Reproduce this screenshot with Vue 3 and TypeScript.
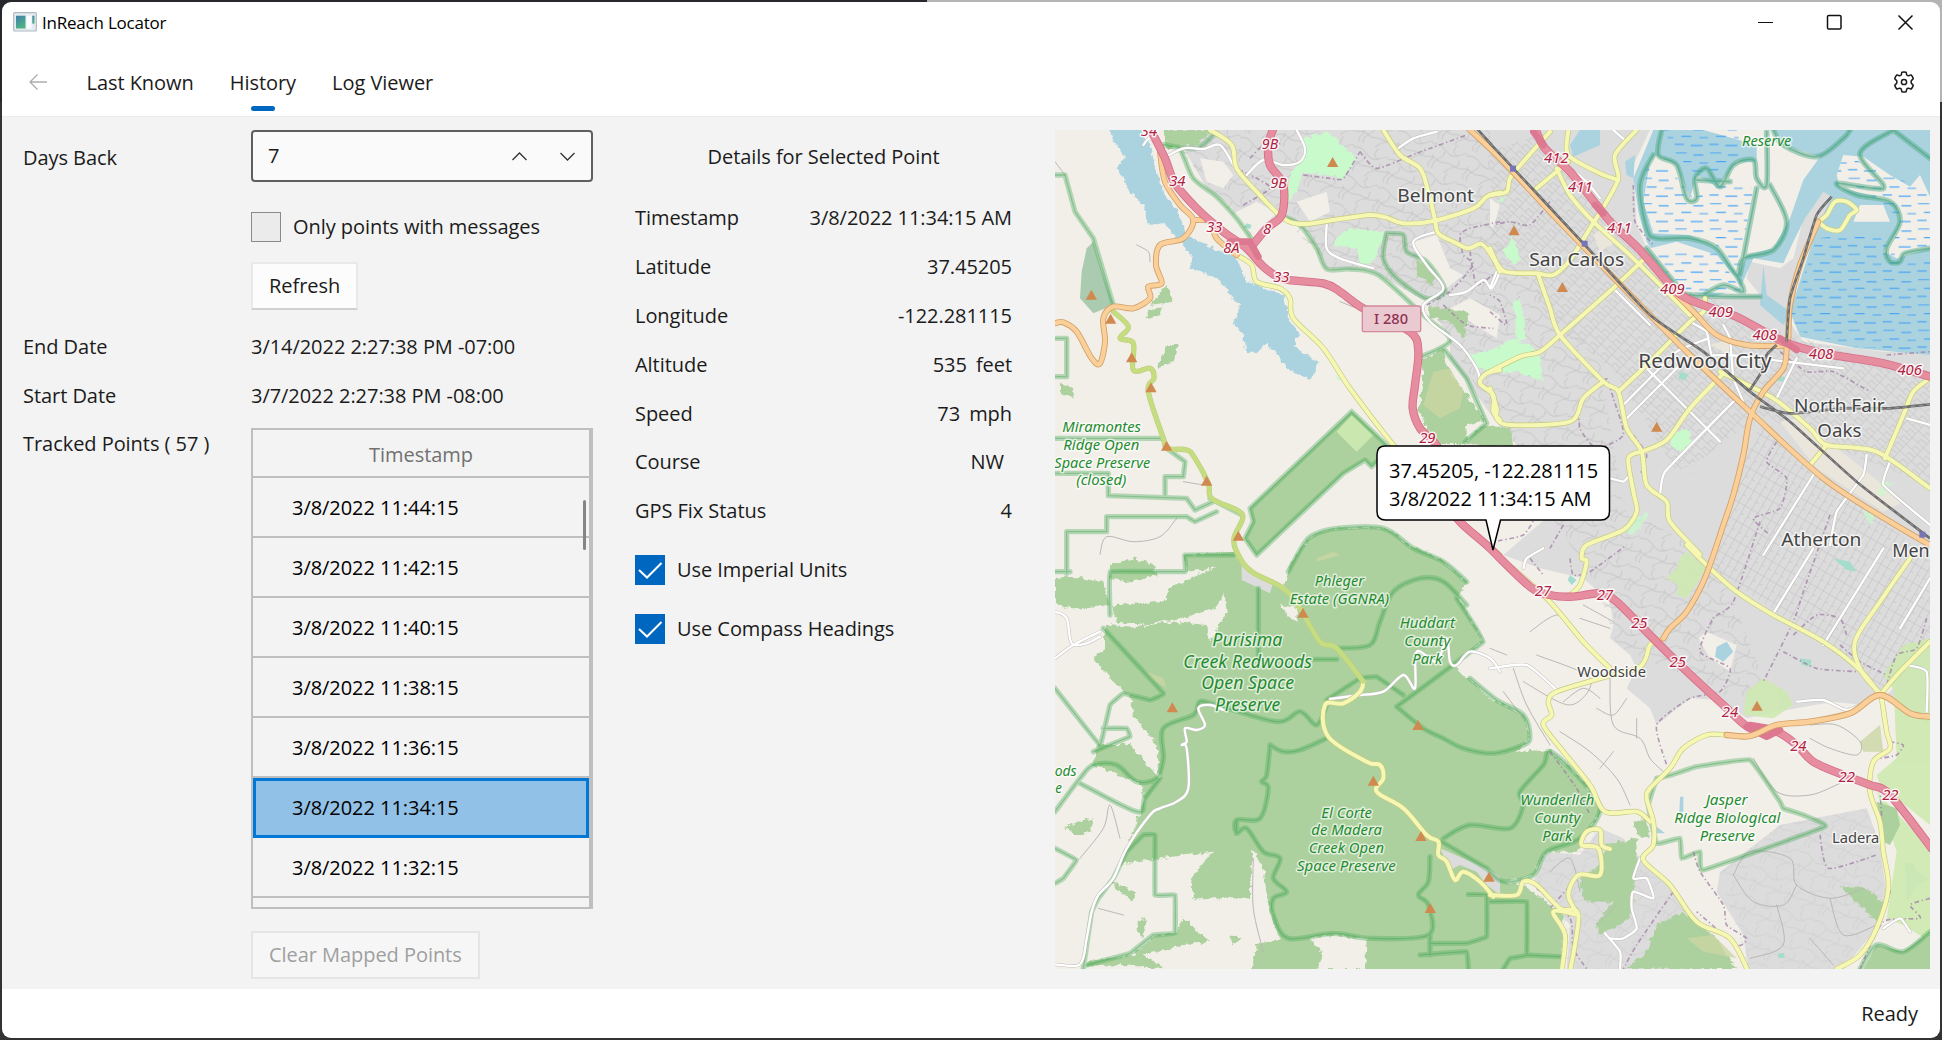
<script setup lang="ts">
import { ref } from 'vue'

interface MapLabel { t: string; x: number; y: number; w: number; s: number }
interface Detail { label: string; value: string; unit?: string; shift?: boolean }

const daysBack = ref(7)
const tabs = ['Last Known', 'History', 'Log Viewer']
const activeTab = ref('History')
const points = ['11:44:15', '11:42:15', '11:40:15', '11:38:15', '11:36:15', '11:34:15', '11:32:15'].map(t => '3/8/2022 ' + t)
const selected = ref('3/8/2022 11:34:15')

const details: Detail[] = [
  { label: 'Timestamp', value: '3/8/2022 11:34:15 AM' },
  { label: 'Latitude', value: '37.45205' },
  { label: 'Longitude', value: '-122.281115' },
  { label: 'Altitude', value: '535', unit: 'feet' },
  { label: 'Speed', value: '73', unit: 'mph' },
  { label: 'Course', value: 'NW', shift: true },
  { label: 'GPS Fix Status', value: '4' },
]
const options = ['Use Imperial Units', 'Use Compass Headings']

const L = (t: string, x: number, y: number, w: number, s: number): MapLabel => ({ t, x, y, w, s })

const towns = [
  L('Belmont', 1157, 230, 230, 56), L('San Carlos', 1580, 422, 285, 56), L('Redwood City', 1965, 730, 400, 60),
  L('North Fair', 2368, 862, 272, 54), L('Oaks', 2368, 937, 132, 54), L('Atherton', 2314, 1263, 240, 54),
  L('Menlo', 2606, 1295, 158, 54), L('Woodside', 1685, 1655, 206, 44), L('Ladera', 2417, 2153, 142, 44),
]
const parks = [
  L('Miramontes', 155, 920, 236, 43), L('Ridge Open', 154, 975, 228, 43), L('Space Preserve', 157, 1028, 288, 43), L('(closed)', 154, 1080, 150, 43),
  L('Reserve', 2150, 63, 148, 42), L('Phleger', 868, 1382, 148, 43), L('Estate (GGNRA)', 868, 1436, 298, 43),
  L('Huddart', 1132, 1510, 166, 43), L('County', 1132, 1564, 138, 43), L('Park', 1132, 1618, 90, 43),
  L('Purisima', 592, 1563, 210, 52), L('Creek Redwoods', 593, 1628, 386, 52), L('Open Space', 593, 1692, 278, 52), L('Preserve', 593, 1757, 196, 52),
  L('El Corte', 890, 2078, 152, 43), L('de Madera', 890, 2131, 212, 43), L('Creek Open', 889, 2185, 226, 43), L('Space Preserve', 889, 2239, 296, 43),
  L('Wunderlich', 1522, 2040, 222, 43), L('County', 1522, 2094, 138, 43), L('Park', 1522, 2147, 90, 43),
  L('Jasper', 2030, 2040, 126, 43), L('Ridge Biological', 2032, 2093, 318, 43), L('Preserve', 2032, 2147, 166, 43),
  L('ods', 47, 1952, 66, 43), L('e', 26, 2005, 20, 43),
]
const exits: [string, number, number][] = [
  ['34', 297, 32], ['34', 382, 183], ['33', 493, 320], ['8A', 544, 385], ['33', 694, 470], ['9B', 660, 72], ['9B', 686, 190], ['8', 651, 326], ['29', 1132, 955],
  ['412', 1519, 115], ['411', 1591, 200], ['411', 1708, 325], ['409', 1867, 507], ['409', 2012, 577], ['408', 2144, 645], ['408', 2313, 703], ['406', 2579, 750],
  ['27', 1479, 1414], ['27', 1665, 1424], ['25', 1768, 1510], ['25', 1883, 1627], ['24', 2040, 1775], ['24', 2245, 1878], ['22', 2390, 1972], ['22', 2521, 2026],
]
const peaks = [
  [848, 112], [124, 510], [182, 582], [245, 698], [303, 788], [350, 963], [470, 1068], [565, 1233], [1392, 317], [1537, 487], [1820, 906],
  [759, 1464], [367, 1748], [1104, 1801], [970, 1968], [1113, 2134], [1317, 2256], [1141, 2350], [2121, 1743],
]

// Turns point lists ("x,y x,y M x,y ...") into path data; bend 0 keeps straight segments.
const trace = (dx: number, dy: number, bend: number, list: string[]): string[] => list.map(src => src.split('M').map(part => {
  const pts = part.trim().split(/\s+/).filter(Boolean).map(c => { const [x, y] = c.split(',').map(Number); return [x + dx, y + dy] })
  if (!pts.length) return ''
  let d = `M${pts[0].join(' ')}`
  for (let i = 0; i < pts.length - 1; i++) {
    const p0 = pts[i - 1] ?? pts[i], p1 = pts[i], p2 = pts[i + 1], p3 = pts[i + 2] ?? p2
    d += `C${p1[0] + (p2[0] - p0[0]) * bend} ${p1[1] + (p2[1] - p0[1]) * bend} ${p2[0] - (p3[0] - p1[0]) * bend} ${p2[1] - (p3[1] - p1[1]) * bend} ${p2[0]} ${p2[1]}`
  }
  return d
}).join(''))

const secondary = [
  ...trace(0, 0, .16, [
    '480,15 545,60 560,130 620,200 700,280 760,297 850,285 960,270 1010,278 1060,295 1150,288 1270,250 1310,215 1350,203',
    '1000,15 1050,90 1110,130 1135,200 1155,285 1165,325 1210,350 1255,370 1295,357 1330,400 1350,440',
    '560,390 605,420 620,470 690,490 720,520 730,580 820,670 900,790 1030,960 1200,1160 1350,1290',
    '1350,735 1310,745 1290,775 1330,810 1330,860 1350,885',
  ]),
  ...trace(1320, 0, .14, [
    '0,210 50,200 60,160 100,110 180,20', '0,370 40,438 140,445 190,450 240,405 300,310 350,230 385,160 375,90 440,15',
    '145,450 180,550 210,630 340,770 385,800 410,910 455,980 470,1080 530,1130 540,1190 630,1288',
    '0,740 90,695 150,680 210,630 380,480 470,395', '385,800 470,720 600,590 640,560 645,520',
    '455,980 530,945 600,850 700,745', '455,980 415,1000 430,1100 440,1160 400,1215 290,1260 275,1300 290,1310 270,1380 235,1415',
    '0,790 20,850 20,880 60,900 240,890 280,820 340,770', '200,130 240,210 310,290 430,400 600,570',
    '235,15 235,90 330,145 385,165', '140,190 235,110', '690,740 850,820 960,910 1010,960 1160,980 1320,1090',
    '1010,960 960,1020', '1185,1000 1240,870 1270,800 1320,760', '985,290 1010,310 1050,315 1080,270 1100,255 1070,230 1035,230 1010,270 985,290',
  ]),
  ...trace(1320, 1260, .16, [
    '20,30 170,160 280,290 360,370', '590,0 660,70 740,140 850,210 1000,290 1110,375 1170,450', '1260,40 1170,170 1095,290 1115,380 1170,445', '1170,450 1230,380 1320,290',
    '1175,460 1190,560 1200,610 1150,650 1140,740 1170,830 1180,920 1195,1030 1160,1150 1110,1230 1040,1272',
    '510,285 480,300 450,365 330,400 200,440 175,470 185,510 160,540 220,620 300,720 345,800 440,800 480,830',
    '710,570 650,570 580,610 540,670 480,730 470,760 490,830 490,900 460,945 540,1020 620,1130 720,1180 775,1280',
    '0,1050 80,1050 100,1010 140,1020 210,1090 265,1110 240,1280', '265,1110 190,1100 225,1170 215,1280', '265,1110 235,1050 265,990 330,990 325,910 275,900 290,860 330,855 335,900 360,912',
  ]),
]
const skyline = trace(0, 0, .18, ['190,560 235,605 210,640 250,655 250,735 300,730 312,760 295,800 340,940 352,970 410,975 435,1000 475,1075 485,1120 560,1155 578,1180 552,1240 565,1290 605,1340 700,1390 750,1450 810,1550 860,1570 940,1670'])
const skylineSouth = trace(0, 0, .18, ['940,1670 930,1700 880,1735 825,1740 835,1835 950,1910 990,1920 1000,1960 980,2000 1060,2050 1130,2130 1165,2150 1165,2190 1190,2210 1215,2265 1240,2240 1290,2270 1330,2315'])
const primary = trace(0, 0, .16, [
  '330,80 345,170 390,240 430,285 400,340 330,360 318,420 335,475 295,485 300,520 250,550 190,545 160,580 165,650 150,715 125,700 80,620 40,592 15,595',
  '430,285 480,290 500,340 560,390', '1255,10 1350,100 1500,260 1620,385 1770,540 1920,690 2100,860 2320,1060 2520,1190 2640,1260',
  '2210,670 2200,730 2140,800 2100,880 2080,990 2050,1110 2020,1200 1990,1290 1960,1370 1910,1460 1860,1510 1840,1540', '1880,510 1935,565 2000,630 2090,660 2210,662',
  '2215,640 2220,540 2250,420 2305,290',
])
const portola = trace(0, 0, .16, ['2030,1830 2100,1833 2180,1800 2280,1790 2400,1765 2490,1710 2580,1765 2640,1775'])
const motorway = trace(0, 0, .16, [
  '300,10 345,100 375,175 440,250 520,320 590,370 640,425 700,462 820,475 870,500 940,550 1080,620 1105,680 1095,780 1088,850 1110,910 1170,980 1200,1150 1320,1270 1440,1385 1500,1410 1570,1415 1650,1405 1700,1430 1770,1500 1880,1610 2020,1740 2100,1810 2180,1820 2240,1860 2290,1910 2380,1950 2460,1980 2520,2010 2645,2170',
  '1455,10 1485,70 1560,140 1640,240 1690,300 1770,375 1880,500 1960,540 2060,575 2200,650 2320,685 2500,715 2640,755',
  '670,10 655,60 660,120 700,180 695,270 650,310 600,370',
])
const minor = [
  ...trace(0, 0, .16, ['340,100 400,70 460,72 510,60 550,120', '740,15 765,70 750,110 700,120 640,105 590,150', '830,300 830,370 870,400 970,430', '1160,320 1090,350 1130,420 1180,490 1120,540 1140,590 1230,660 1280,730 1290,770', '1200,510 1250,500 1300,465 1325,490 1350,440', '1045,70 1090,40 1160,20', '280,60 300,40 330,70']),
  ...trace(1320, 0, .05, ['370,490 480,600', '460,720 520,780 690,950', '400,840 560,680 655,640', '410,880 480,810 600,690', '510,1110 525,1040 740,820', '600,590 650,620 665,690 720,690 1060,730', '700,600 720,640 730,760 760,830', '920,700 860,820', '1130,990 1120,1050 1040,1160 1020,1260', '970,1050 820,1290', '0,490 20,440', '360,1060 400,1070 420,1050', '240,130 290,170 330,220', '370,15 410,50', '1200,1010 1180,1080 1320,1200', '1320,900 1250,880']),
  ...trace(0, 1260, .16, ['15,340 70,300 150,260', '15,200 50,220 65,295 110,295 150,275', '15,1258 90,1258 110,1180 125,1100 145,1050 190,1000 230,910 300,810 330,790 380,770 415,730 410,610 395,600 410,590 405,550 440,555 465,540 445,490 480,480 520,495', '930,450 1000,440 1060,390 1095,430 1100,320 1160,350 1190,280 1200,350 1220,360 1260,320 1320,340 1350,380', '840,462 930,450']),
  ...trace(1320, 1260, .1, ['0,370 110,360 200,435', '100,70 110,40 160,10', '970,10 850,205', '1180,10 1000,300', '1230,250 1320,100', '920,470 1000,465 1070,495 1130,470', '1250,360 1310,380 1310,500', '450,940 430,1000 470,1000 490,1060 430,1040 425,1090 440,1150 400,1180 360,1180 345,1165 390,1220 390,1272', '1180,1150 1230,1120 1260,1160']),
]
const rails = trace(0, 0, .1, ['1320,55 1390,130 1600,355 1800,570 1960,680 2100,800 2220,890 2420,1070 2640,1240', '2210,650 2220,520 2260,400 2300,270 2345,215', '2180,660 2150,690 2135,740 2100,795', '2130,845 2220,865 2380,850 2520,850 2640,838', '1280,10 1325,60'])
const borders = trace(0, 0, .1, ['600,100 640,60 690,55 M580,240 660,190 620,160 560,130', '930,80 980,130 1100,85 1250,30', '760,150 840,160 880,160 930,80', '1350,290 1260,310 1230,330 1240,390 1270,420 1200,500 1130,540',
  '1320,560 1370,600 1350,530 1320,510', '1500,230 1440,300 1380,290 1330,300', '1670,760 1630,800 1590,830 1590,910 1640,970 1720,930 1690,820 1670,760', '1750,180 1755,290 1810,360', '1260,380 1280,480 1340,440 M1180,540 1250,600 1330,610',
  '1750,930 1790,990 1770,1050', '2180,950 2150,1010 2210,1060 2190,1150 2110,1180 2160,1230', '2190,680 2270,740 2350,740 2460,800 M2510,690 2640,680', '2340,1170 2260,1400 2230,1490 2140,1670', '1460,1170 1420,1230 1330,1250 M1540,1200 1500,1270',
  '2130,1190 2050,1430 1990,1480 1950,1580 2040,1630 2010,1700 1920,1720 1820,1800 1850,1920', '2200,1580 2300,1630 2420,1640 M2230,1530 2300,1470 2370,1480 2390,1530', '2630,1480 2600,1570 2540,1590 2510,1680',
  '2370,1560 2430,1610 2510,1650', '1560,1300 1570,1350 1620,1340 1730,1260', '1580,2260 1500,2350 M1870,2300 1760,2460 1720,2532', '1930,2180 1950,2240 2020,2340 2030,2400 2090,2440 2060,2460 1940,2360', '2310,2130 2335,2230 2480,2190', '1500,1880 1580,1990 1620,2070',
  '2520,1850 2560,1860 2540,1890 2490,1900 M2640,2320 2580,2340 2610,2380 2500,2390 2430,2532', '1460,2290 1560,2380 1570,2470 1610,2532', '1440,1300 1480,1350', '2490,1990 2500,2150 2520,2300 2480,2410'])
const preserves = [
  ...trace(0, 0, 0, ['15,150 45,150 75,260 130,340 190,540', '15,640 50,640 50,755 15,755', '15,940 340,940', '350,970 405,1010 400,1055 345,1055 345,1110', '15,1045 175,1045 175,1112 410,1120 435,1155 490,1130', '50,1345 50,1220 170,1220 170,1175 410,1175 435,1190 500,1160',
    '905,860 1020,970 965,1025 945,1005 880,1045 620,1290 585,1240 610,1190 600,1150 905,860', '480,1120 575,1170 M1180,670 1250,760 1310,895 1245,950']),
  ...trace(0, 0, .14, ['340,60 390,75 430,160 500,215 560,280 610,350', '690,270 750,300 800,370 830,432 900,432 985,450 1120,570 1200,645 1115,695', '340,60 440,70 490,30', '1010,325 1000,400 1040,460 1130,520 1185,495 1130,410 1070,380 1060,330 1010,325']),
  ...trace(0, 1260, .02, ['15,80 60,80 M180,210 180,80 405,80 405,30 550,30', '160,250 340,445 300,465 220,445 180,480 150,600 15,430', '130,620 240,575 230,550 160,550', '625,130 625,330', '790,343 860,343',
    '830,465 930,400 980,395 1060,450', '560,825 560,865', '230,920 280,870 315,870 315,1050 375,1050 375,1165 310,1170 240,1225 110,1260', '100,1270 125,1100 145,1060 190,1000 230,920', '1140,1195 1250,1195 1310,1175 1310,1050 1255,1048', '1110,1230 1250,1220 1255,1272', '1140,1170 1140,1230',
    '1220,160 1300,290 1040,485', '1320,1070 1430,1070 1430,1230 1380,1240 1360,1272', '15,910 80,945 40,1000 15,1015', '1430,1230 1530,1235']),
  ...trace(0, 1260, .16, ['860,310 960,300 990,230 1030,140 1110,100 1180,110 1250,180', '15,800 90,700 130,660 200,660 260,710 320,700 340,640 340,550 430,510 450,470 500,480 680,530 750,500 800,540 830,480', '90,715 260,800 285,760 330,700',
    '660,600 650,690 635,710 655,730 630,820 560,825 560,865 590,850 640,920 690,940 670,1000 710,1040 670,1060 670,1110 715,1180 850,1165 960,1180 1135,1170 1135,1080 1105,1050 1135,1010 1140,935', '660,600 700,620 750,615 830,580',
    '1040,485 1120,550 1180,580 1240,610 1330,625 1420,600 1440,575 1420,510 1340,465 1260,400', '1175,890 1310,970', '1180,880 1260,840 1380,850 1420,780 1410,740 1480,660 1500,620 1580,690 1650,790 1590,880 1490,920 1450,990 1360,1010 1310,970',
    '715,80 760,0 790,-30 860,-50 1000,-50 1090,10 1180,50 1250,110', '2640,1160 2560,1220 2480,1200 2430,1272']),
  ...trace(1320, 1260, .04, ['500,700 545,690 620,665 780,645 870,770 880,790 940,810 1005,845 640,975 630,920 575,940 570,880 500,895 475,780 500,700']),
]
const shore = trace(1320, 0, .16, ['515,15 505,90 560,120 590,220 620,220 615,160 650,130 690,185 730,120 790,105 800,160 830,180 830,20', '490,90 450,180 470,310 500,340 600,340 680,370 740,450 760,400 850,375 890,290 840,180', '620,165 720,170 M800,190 750,450', '470,370 560,480 600,510 810,515', '640,510 700,480 760,500 740,450',
  '1210,15 1110,85 1180,180 1150,190 1040,175 1100,210 1200,230 1230,290 1190,370 1200,410 1230,410 1245,385 1320,370', '850,15 880,60 980,95 1060,40 1080,15', '1210,15 1320,100'])
const lanes = trace(0, 0, .16, ['15,110 45,150', '260,360 295,380 300,410', '150,1288 170,1235 250,1250 330,1235 380,1180', '400,1070 460,1080', '870,530 920,550', '2110,1900 2180,2000 2280,2010 2370,1975', '90,2200 160,2110 180,2040 210,2140',
  '1440,1520 1530,1470 1600,1560 M1460,1590 1620,1660 1560,1740 1420,1670', '1680,1660 1690,1800 1770,1840 1800,1900 1840,1940', '1390,1630 1430,1740 1500,1860', '1730,1720 1690,1770 1640,1750 M1760,1780 1760,1840', '2280,1800 2360,1800 2430,1850 2420,1890 2340,1870 2280,1840',
  '145,2350 220,2370', '610,2200 610,2350 640,2480', '1370,1590 1320,1570 M1600,1440 1690,1490 M1590,1480 1680,1510', '2050,2250 2100,2180 2220,2200 2240,2280 2340,2320 2440,2290 M2180,2340 2200,2460 2100,2500', '2240,2280 2200,2340 2110,2330 2050,2250', '2340,2320 2380,2430 2480,2400 M2280,2440 2350,2520', '1500,2240 1560,2200 1590,2300 M1640,2400 1700,2340',
  '1540,1730 1600,1690 1650,1720 M1530,1820 1620,1880 1700,1960 1740,2040 M1690,1880 1650,1930 M1360,1700 1420,1780'])
</script>

<template>
  <div class="desktop">
    <main class="window">
      <header class="titlebar">
        <svg class="app-icon" viewBox="0 0 24 20">
          <defs><linearGradient id="iconShade" x2="0.5" y2="1"><stop stop-color="#3f7fae" /><stop offset="1" stop-color="#4fb283" /></linearGradient></defs>
          <rect x=".7" y=".7" width="22.6" height="18.3" rx="1" fill="#e6ebf0" stroke="#aeb9c4" stroke-width="1.2" />
          <rect x="3" y="3.700" width="9.500" height="12.800" fill="url(#iconShade)" /><rect x="13.500" y="3.700" width="5" height="12.800" fill="#fafcff" />
          <rect x="19.300" y="3.700" width="2.200" height="8" fill="url(#iconShade)" />
        </svg>
        <h1>InReach Locator</h1>
        <svg class="captions" viewBox="0 0 160 20" fill="none" stroke="#111" stroke-width="1.5">
          <path d="M3 10.500h15" stroke-width="1.200" /><rect x="72.500" y="3.500" width="13.500" height="13.500" rx="1.300" /><path d="M143.500 3.500l14 14M157.500 3.500l-14 14" />
        </svg>
      </header>

      <nav class="nav">
        <svg class="back" viewBox="0 0 20 18" fill="none" stroke="#adadad" stroke-width="1.3"><path d="M19 9H2M9.500 1.500L2 9l7.500 7.500" /></svg>
        <a v-for="t in tabs" :key="t" :class="{ active: t === activeTab }" @click="activeTab = t">{{ t }}</a>
        <svg class="gear" viewBox="0 0 22 22" fill="none" stroke="#1b1b1b" stroke-width="1.5" stroke-linejoin="round">
          <path d="M8.900 1.200Q11 .7 13.100 1.200L13.700 3.900Q14.300 4.800 15.500 4.700L18.100 3.900Q19.700 5.500 20.300 7.700L18.400 9.600Q17.800 11 18.400 12.400L20.300 14.300Q19.700 16.500 18.100 18.100L15.500 17.300Q14.300 17.200 13.700 18.100L13.100 20.800Q11 21.300 8.900 20.800L8.300 18.100Q7.700 17.200 6.500 17.300L3.900 18.100Q2.300 16.500 1.700 14.300L3.600 12.400Q4.200 11 3.600 9.600L1.700 7.700Q2.300 5.500 3.900 3.900L6.500 4.700Q7.700 4.800 8.300 3.900Z" />
          <circle cx="11" cy="11" r="2.600" />
        </svg>
      </nav>

      <section class="content">
        <div class="query">
          <label class="days">Days Back</label>
          <div class="number">
            <span>{{ daysBack }}</span>
            <svg viewBox="0 0 16 9" @click="daysBack++"><path d="M1 8l7-7 7 7" /></svg>
            <svg viewBox="0 0 16 9" @click="daysBack--"><path d="M1 1l7 7 7-7" /></svg>
          </div>
          <div class="check second"><i></i><span>Only points with messages</span></div>
          <button class="second">Refresh</button>
          <label>End Date</label><span class="w">3/14/2022 2:27:38 PM -07:00</span>
          <label>Start Date</label><span class="w">3/7/2022 2:27:38 PM -08:00</span>
          <label class="tracked">Tracked Points ( 57 )</label>
          <div class="table">
            <div class="head">Timestamp</div>
            <div v-for="p in points" :key="p" class="row" :class="{ on: p === selected }" @click="selected = p">{{ p }}</div>
            <div class="thumb"></div>
          </div>
          <button class="second" disabled>Clear Mapped Points</button>
        </div>

        <div class="details">
          <h2>Details for Selected Point</h2>
          <div v-for="d in details" :key="d.label" class="detail">
            <span>{{ d.label }}</span><span class="value" :class="{ shift: d.shift }">{{ d.value }}<em v-if="d.unit">{{ d.unit }}</em></span>
          </div>
          <div v-for="o in options" :key="o" class="check on">
            <i><svg viewBox="0 0 30 30"><path d="M4 15l8 7.500L26.500 8" /></svg></i><span>{{ o }}</span>
          </div>
        </div>

        <div class="map">
          <svg viewBox="15 15 2625 2517" preserveAspectRatio="none">
            <defs>
              <pattern id="streets" width="46" height="27" patternUnits="userSpaceOnUse" patternTransform="rotate(43)"><path d="M0 1H46M1 0V27M24 14H46M24 14V27" stroke="#c3c2c2" stroke-width="2" fill="none" /></pattern>
              <pattern id="streets2" width="52" height="22" patternUnits="userSpaceOnUse" patternTransform="rotate(-60)"><path d="M0 1H52M1 0V22M28 0V11" stroke="#c3c2c2" stroke-width="2" fill="none" /></pattern>
              <pattern id="hills" width="110" height="90" patternUnits="userSpaceOnUse" patternTransform="rotate(20)"><path d="M0 20C30 0 50 50 80 30S100 10 110 20M20 90C10 60 50 50 40 30M60 90C70 60 100 70 90 40M0 60C20 50 30 70 50 62S90 70 110 60M70 0C60 20 70 30 80 30M10 90C-5 70 20 70 10 50" stroke="#c0bfbf" stroke-width="2.200" fill="none" /></pattern>
              <pattern id="marsh" width="104" height="76" patternUnits="userSpaceOnUse"><path d="M4 8h34M58 14h30M22 34h30M76 38h26M2 58h28M50 62h36" stroke="#4aa5f5" stroke-width="3.500" /></pattern>
              <filter id="rough" x="-2%" y="-2%" width="104%" height="104%"><feTurbulence type="fractalNoise" baseFrequency=".06" numOctaves="3" seed="4" /><feDisplacementMap in="SourceGraphic" scale="20" xChannelSelector="R" yChannelSelector="G" /></filter>
            </defs>
            <rect x="0" y="0" width="2660" height="2560" fill="#f2efe9" />

            <!-- built-up areas -->
            <g fill="#dcdcdc">
              <path d="M340 15L400 70 430 120 470 190 540 240 600 330 700 270 770 310 830 430 960 435 1130 530 1200 640 1200 700 1345 900 1400 960 1500 1170 1360 1290 1470 1330 1600 1360 1680 1430 1690 1500 1680 1540 1740 1590 1760 1630 1730 1690 1800 1750 1820 1800 1920 1720 2010 1725 2090 1780 2180 1760 2350 1730 2440 1740 2500 1700 2640 1600V680L2500 680 2260 650 2225 600 2220 560 2280 350 2320 270 2350 210 2320 195 2260 280 2230 400 2190 430 2100 410 2090 460 2130 510 1960 520 1880 490 1790 370 1760 300 1750 120 1800 15Z" />
              <path d="M2190 2100L2450 2050 2490 2160 2510 2310 2480 2410 2380 2532H2095L2080 2430 2000 2300 2010 2240Z" />
              <path d="M1490 2180L1590 2190 1650 2110 1720 2140 1770 2200 1870 2300 1980 2420 1990 2532H1550L1560 2400 1450 2270Z" />
              <path d="M2600 1620L2640 1600V1800L2500 1720Z" />
            </g>
            <path d="M340 15L600 330 700 270 830 430 960 435 1130 530 1345 900 1400 960 1500 1170 1640 1380 1700 1560 1990 1700 2180 1760 2000 1300 1720 1150 1650 700 1450 480 1320 300 1320 15Z" fill="url(#hills)" />
            <path d="M1320 80L1460 30 1780 370 2100 590 2640 760V1080L2430 1000 2130 870 1960 1000 1880 1040 1700 750 1480 560 1430 420 1330 420Z" fill="url(#streets)" />
            <path d="M2130 900L2640 1300V1600L2500 1690 2380 1600 1990 1330 2080 1010Z" fill="url(#streets2)" />
            <path d="M2190 2100L2450 2050 2490 2160 2500 2310 2380 2532H2095L2010 2240ZM1490 2180L1650 2110 1870 2300 1980 2420 1900 2532H1560L1450 2270Z" fill="url(#hills)" opacity=".5" />
            <g fill="#f2efe9"><path d="M450 100L520 110 550 150 520 190 470 170ZM540 270L620 230 680 265 610 330ZM740 230L830 200 840 260 780 290ZM1090 350L1160 330 1200 430 1240 450 1190 490 1120 420ZM1320 220L1350 240 1330 310 1320 300ZM1945 1540L1970 1520 2060 1560 2040 1640 1980 1600ZM1200 550L1260 520 1350 570 1340 640 1260 590Z" /></g>
            <g fill="#ebe6dc"><path d="M1630 330L1670 300 1700 350 1650 380ZM2190 890L2240 880 2400 1000 2560 1130 2500 1160 2300 1030ZM1980 660L2050 640 2040 690Z" /></g>

            <!-- water and marsh -->
            <g fill="#aad3df">
              <path filter="url(#rough)" d="M175 10H270L300 60 320 150 350 220 380 250 410 330 470 360 560 400 590 470 700 510 720 590 750 630 730 660 805 715 785 760 720 740 690 700 650 655 620 685 585 680 580 630 550 600 570 540 500 460 420 430 425 390 370 330 340 290 300 300 280 240 240 200 200 130 225 100 200 60Z" />
              <path d="M1810 15H2640V690L2420 670 2250 635 2220 560 2300 310 2345 215 2320 200 2265 280 2230 350 2200 415 2110 400 2070 490 1990 515 1880 490 1790 350 1765 260 1750 160Z" />
              <path d="M1590 15H1650V60L1570 95 1560 60ZM1725 110L1755 90 1750 160 1730 150ZM2000 1565L2030 1550 2050 1580 2020 1610 1995 1595ZM1890 2015L1900 2015 1900 2060 1888 2065ZM1820 2105L1845 2125 1820 2125ZM2565 2215L2590 2215 2600 2240 2640 2260 2600 2280 2570 2330 2570 2270Z" />
              <path d="M2140 420L2150 510 2220 560 2200 600 2130 540Z" />
            </g>
            <g stroke-linejoin="round">
              <path fill="#f2efe9" d="M1840 15H2170L2200 60 2310 95 2260 165 2220 280 2170 370 2090 390 2065 450 2000 370 1920 330 1810 325 1780 230 1800 110 1815 90 1880 120 1920 220 1940 150 2000 185 2060 110 2120 110 2120 60 1960 15ZM1800 370L1880 350 2000 390 2060 460 2080 505 1880 500ZM2360 150L2380 90 2440 95 2520 150 2580 185 2610 150 2640 215V370L2540 400 2500 380 2550 300 2540 240 2460 210 2370 190ZM2430 240L2500 240 2520 290 2410 290Z" />
              <path fill="url(#marsh)" d="M1840 15H2060L2080 90 1980 150 1930 140 1880 90ZM1790 120L1850 120 1930 220 2030 170 2110 190 2065 440 1980 340 1810 320 1780 240ZM1800 370L2000 385 2080 505 1890 500ZM2360 150L2380 90 2520 150 2640 200V370L2520 395 2550 280 2460 210ZM2300 340L2510 320 2510 400 2640 400V680L2420 665 2235 615 2225 560Z" />
            </g>

            <!-- woodland -->
            <g fill="#add19e" filter="url(#rough)">
              <path d="M165 1500L260 1505 370 1490 470 1500 480 1550 530 1460 520 1380 560 1290 610 1340 700 1390 720 1320 760 1260 790 1230 860 1208 1000 1208 1090 1260 1180 1310 1250 1370 1225 1415 1300 1550 1210 1620 1240 1650 1320 1720 1420 1770 1440 1840 1400 1880 1500 1875 1580 1950 1660 2050 1600 2140 1580 2180 1490 2180 1450 2250 1360 2270 1420 2280 1540 2370 1535 2560H600L620 2460 690 2440 670 2390 650 2310 640 2230 610 2170 600 2290 600 2320 480 2320 430 2320 420 2260 490 2180 330 2200 250 2210 210 2220 250 2120 280 2040 280 1980 130 1920 140 1860 240 1860 320 1950 330 1960 320 1860 250 1770 240 1710 180 1660 130 1600 165 1570Z" />
              <path d="M15 1360L60 1355 160 1370 175 1440 110 1450 50 1450 15 1430ZM180 1320L250 1300 310 1320 320 1350 240 1370 180 1360ZM200 1490L190 1440 340 1430 370 1380 500 1330 410 1340 400 1290 560 1280 540 1370 500 1450 390 1480 280 1500Z" />
              <path d="M1180 670L1115 705 1120 780 1105 850 1130 910 1170 960 1250 960 1250 900 1305 885 1270 840 1190 720ZM1240 960L1290 905 1380 905 1390 965ZM350 480L370 530 300 540ZM350 660L385 660 370 710 320 730ZM290 560L340 545 330 570 290 580ZM30 770L70 790 70 820 30 800ZM1135 545L1260 560 1240 640 1200 590 1140 575ZM1100 400L1160 450 1150 480 1100 450ZM340 15H490L440 60 350 70Z" />
              <path d="M60 2100L130 2080 120 2120 90 2130 40 2110ZM180 2270L260 2300 250 2330 200 2290ZM260 2390L290 2380 280 2440 260 2420ZM540 2430L575 2440 550 2460ZM110 2510L250 2490 320 2430 380 2420 400 2380 480 2450 400 2460 280 2490 340 2530 220 2520 110 2525Z" />
              <path d="M1670 2160L1760 2140 1760 2220 1740 2380 1650 2430 1640 2390 1690 2330 1600 2330 1590 2260 1650 2220ZM1820 2400L1900 2360 1990 2430 2060 2532H1730L1790 2480ZM2370 2285L2450 2290 2500 2330 2490 2400ZM1750 2090L1790 2080 1800 2140 1760 2130Z" />
            </g>
            <path fill="#add19e" d="M905 860L1020 970 965 1025 945 1005 880 1045 620 1290 585 1240 610 1190 600 1150Z" />
            <path fill="#f2efe9" filter="url(#rough)" d="M780 2440L850 2430 950 2440 945 2532H800L820 2490ZM1260 1640L1310 1600 1370 1690 1340 1700ZM690 1440L745 1450 740 1490 715 1475ZM240 1390L420 1350 400 1375 250 1400ZM1010 1205L1110 1240 1150 1280 1080 1265Z" />
            <path fill="#dcdcdc" d="M575 1320L610 1340 670 1370 660 1405 575 1365ZM1170 2170L1320 2235 1350 2255V2310L1310 2280 1280 2240 1230 2220 1200 2235Z" />
            <path fill="#aacbb0" d="M130 350L150 420 190 540 130 565 90 520 95 440 110 370Z" />
            <g fill="#cde9b0" opacity=".9">
              <path d="M905 870L860 920 920 980 970 930ZM1850 1360L1880 1330 1890 1300 1910 1280 1970 1330 1930 1390 1910 1420 1880 1410 1885 1380ZM2090 1700L2140 1660 2210 1700 2230 1740 2170 1780 2080 1770ZM2530 1660L2640 1600V2100L2490 1980 2480 1950 2540 1900ZM2480 2000L2640 2170V2450L2560 2400 2510 2380 2540 2180Z" />
              <path d="M2500 1650L2560 1560 2640 1540V1700L2560 1740Z" />
            </g>
            <g fill="#add19e"><path d="M2480 2030L2540 2050 2550 2100 2520 2160 2500 2150ZM2440 2532L2480 2460 2560 2480 2640 2420V2532Z" /></g>
            <g fill="#c9d6a2" opacity=".8"><path d="M1150 740L1200 730 1240 800 1230 850 1170 880 1120 840ZM800 1300L850 1280 870 1290 800 1310ZM290 1640L340 1660 350 1690 300 1660ZM2430 1850L2490 1800 2500 1880 2440 1880ZM1910 2440L1990 2430 2060 2500 1960 2480Z" /></g>
            <g fill="#c8facc" filter="url(#rough)">
              <path d="M760 40L830 20 920 95 880 160 760 140 740 200 700 250 720 150 760 90ZM850 350L900 310 1005 320 970 410 930 420 920 370 850 360ZM1320 690L1380 640 1440 660 1470 700 1480 770 1400 740 1330 740ZM1260 690L1340 670 1340 740 1280 730ZM1360 380L1390 330 1410 400 1390 420ZM1390 530L1410 520 1430 640 1400 650ZM1860 930L1910 910 1930 950 1890 980 1860 960Z" />
              <path d="M1730 1200L1790 1160 1800 1170 1750 1230 1730 1230ZM2500 1070L1510 1060 2530 1070 2500 1110 2480 1110ZM2440 1160L2480 1160 2460 1200ZM1380 210L1360 230 1330 230ZM860 750L880 760 860 770Z" opacity=".7" />
            </g>
            <g fill="#a5dccd"><path d="M1890 740l25 8-8 18-22-5ZM2350 1300l50 10 20 30-30-5ZM2250 1600l35 5-5 20-25-5ZM2180 755l25 0-5 15-20-3ZM1560 1350l20 15-15 15-12-15ZM2185 2485l18 0 0 14-18 0ZM590 295l15 5-5 12-18-5Z" /></g>

            <g fill="none" stroke-linejoin="round" stroke-linecap="round">
              <g stroke="#b9b7b5" stroke-width="3"><path v-for="p in lanes" :key="p" :d="p" /></g>
              <g stroke="#4cab5c" stroke-width="16" opacity=".36"><path v-for="p in preserves" :key="p" :d="p" /></g>
              <g stroke="#3f9f4f" stroke-width="4" opacity=".38"><path v-for="p in preserves" :key="p" :d="p" /></g>
              <g stroke="#4fa888" stroke-width="17" opacity=".45"><path v-for="p in shore" :key="p" :d="p" /></g>
              <g stroke="#3f9f75" stroke-width="5" opacity=".5"><path v-for="p in shore" :key="p" :d="p" /></g>
              <g stroke="#a07fa5" stroke-width="5" stroke-dasharray="14 8 4 8" opacity=".75" stroke-linecap="butt"><path v-for="p in borders" :key="p" :d="p" /></g>
              <g stroke="#c2c0be" stroke-width="10"><path v-for="p in minor" :key="p" :d="p" /></g>
              <g stroke="#fff" stroke-width="7"><path v-for="p in minor" :key="p" :d="p" /></g>
              <g stroke="#c5ca80" stroke-width="16"><path v-for="p in [...secondary, ...skyline, ...skylineSouth]" :key="p" :d="p" /></g>
              <g stroke="#f5f7b2" stroke-width="12"><path v-for="p in [...secondary, ...skylineSouth]" :key="p" :d="p" /></g>
              <g stroke="#c3dd80" stroke-width="13"><path v-for="p in skyline" :key="p" :d="p" /></g>
              <g stroke="#d2a064" stroke-width="18"><path v-for="p in primary" :key="p" :d="p" /></g>
              <g stroke="#fbcf99" stroke-width="13"><path v-for="p in primary" :key="p" :d="p" /></g>
              <g stroke="#d66f8a" stroke-width="25"><path v-for="p in motorway" :key="p" :d="p" /></g>
              <g stroke="#e68da0" stroke-width="20"><path v-for="p in motorway" :key="p" :d="p" /></g>
              <path d="M540 350L600 350 625 395M2090 1805L2150 1835 2190 1815 2100 1800M2190 640L2240 675M1450 20L1480 60M1635 240L1660 265" stroke="#dc7890" stroke-width="20" />
              <g stroke="#d2a064" stroke-width="19"><path v-for="p in portola" :key="p" :d="p" /></g>
              <g stroke="#fbcf99" stroke-width="14"><path v-for="p in portola" :key="p" :d="p" /></g>
              <g stroke="#6d6d6d" stroke-width="8" stroke-linecap="butt"><path v-for="p in rails" :key="p" :d="p" /></g>
              <g stroke="#b5b5b5" stroke-width="2" stroke-dasharray="12 12" stroke-linecap="butt"><path v-for="p in rails" :key="p" :d="p" /></g>
            </g>
            <g fill="#7575b8"><rect x="1380" y="122" width="18" height="18" /><rect x="1595" y="347" width="18" height="18" /><rect x="2608" y="1220" width="18" height="18" /></g>
            <path v-for="p in peaks" :key="p.join()" :d="`M${p[0]} ${p[1] - 16}l17 30h-34z`" fill="#d0894f" />

            <rect x="937" y="543" width="175" height="77" rx="6" fill="#ebc9d0" stroke="#d4899c" stroke-width="4" />
            <text class="shield" x="1023" y="597" textLength="102" lengthAdjust="spacingAndGlyphs">I 280</text>
            <g class="parks"><text v-for="l in parks" :key="l.t + l.y" :x="l.x" :y="l.y" :font-size="l.s" :textLength="l.w" lengthAdjust="spacingAndGlyphs">{{ l.t }}</text></g>
            <g class="exits"><text v-for="e in exits" :key="e.join()" :x="e[1]" :y="e[2]" :textLength="e[0].length * 24.500" lengthAdjust="spacingAndGlyphs">{{ e[0] }}</text></g>
            <g class="towns"><text v-for="l in towns" :key="l.t" :x="l.x" :y="l.y" :font-size="l.s" :textLength="l.w" lengthAdjust="spacingAndGlyphs">{{ l.t }}</text></g>
          </svg>
          <div class="callout">
            <svg viewBox="0 0 235 108"><path d="M9 1H225Q233.500 1 233.500 9.500V66.500Q233.500 75 225 75H124.500L117 105 110 75H9.500Q1 75 1 66.500V9.500Q1 1 9 1Z" fill="#fff" stroke="#000" stroke-width="1.500" /></svg>
            <p>37.45205, -122.281115</p><p>3/8/2022 11:34:15 AM</p>
          </div>
        </div>
      </section>

      <footer>Ready</footer>
    </main>
  </div>
</template>

<style>
body { margin: 0; background: #2c2c2e; }
</style>

<style scoped>
.desktop {
  box-sizing: border-box; width: 1942px; height: 1040px; padding: 2px; overflow: hidden;
  background: linear-gradient(90deg, #26282b 927px, #b4b4b4 927px) top / 100% 102px no-repeat, #333;
  font: 20px/24px "Open Sans", "Noto Sans", sans-serif; letter-spacing: -.05px; color: #1b1b1b;
}
.window { display: flex; flex-direction: column; height: 1036px; background: #fff; border-radius: 9px; overflow: hidden; }
h1, h2, p { margin: 0; font-weight: 400; font-size: inherit; }
.titlebar { display: flex; flex: none; align-items: flex-start; height: 48px; }
.app-icon { width: 24px; height: 20px; margin: 10px 0 0 11px; }
.titlebar h1 { margin: 9px 0 0 5px; font-size: 17px; letter-spacing: -.22px; color: #000; }
.captions { width: 160px; height: 20px; margin: 10px 25px 0 auto; }
.nav { display: flex; flex: none; align-items: center; height: 66px; border-bottom: 1px solid #ececec; }
.back { width: 20px; height: 18px; margin: -2px 38.500px 0 26px; }
.nav a { position: relative; margin-right: 36px; line-height: 66px; }
.nav a.active::after { content: ""; position: absolute; left: 50%; bottom: 5px; width: 24px; height: 5px; margin-left: -12px; border-radius: 3px; background: #0067c0; }
.gear { width: 22px; height: 22px; margin: -3px 25px 0 auto; }
.content { display: flex; flex: none; box-sizing: border-box; height: 872px; padding: 13px 10px 0 22px; background: #f3f3f3; }
.query { display: grid; grid-template: 82px 50px 60px 49px 49px 511px 48px / 227px 342px; align-items: start; }
.query > label, .query > .w { line-height: 49px; }
.query > label { margin-left: -1px; }
.query > .days { line-height: 55px; }
.query > .tracked { line-height: 47px; }
.second { grid-column: 2; justify-self: start; }
.w { white-space: nowrap; }
.number { display: flex; align-items: center; box-sizing: border-box; height: 52px; padding: 0 15px 0 15px; border: 2px solid #5f5f5f; border-radius: 4px; background: #fafafa; }
.number span { flex: 1; margin-top: -1px; }
.number svg { width: 17px; height: 9px; margin-left: 31px; fill: none; stroke: #333; stroke-width: 1.300; }
.check { display: flex; align-items: center; height: 30px; gap: 12px; }
.check i { box-sizing: border-box; width: 30px; height: 30px; border: 1.500px solid #8a8a8a; background: #ebebeb; }
button { box-sizing: border-box; height: 48px; padding: 0 16px; border: 2px solid #e9e9e9; border-bottom-color: #d0d0d0; background: #fcfcfc; font: inherit; letter-spacing: inherit; color: inherit; }
button:disabled { border-color: #e5e5e5; background: #f6f6f6; color: #9f9f9f; }
.table { position: relative; box-sizing: border-box; height: 481px; margin-top: 8px; border: solid #bfbfbf; border-width: 2px 4px 2px 2px; overflow: hidden; }
.head { height: 46px; border-bottom: 2px solid #bfbfbf; line-height: 49px; text-align: center; color: #717171; }
.row { box-sizing: border-box; height: 60px; padding-left: 39px; border-bottom: 2px solid #bfbfbf; line-height: 60px; color: #000; white-space: nowrap; }
.row.on { border: 3px solid #0078d7; padding-left: 36px; background: #91c1e7; line-height: 54px; }
.thumb { position: absolute; top: 70px; right: 3px; width: 3px; height: 50px; border-radius: 2px; background: #858585; }
.details { width: 377px; margin-left: 42px; }
.details h2 { height: 64px; line-height: 54px; text-align: center; }
.detail { display: flex; justify-content: space-between; height: 48.900px; line-height: 48.900px; }
.value.shift { margin-right: 8px; }
.value em { font-style: normal; margin-left: 9px; }
.check.on { margin-top: 29px; height: 30px; }
.detail + .check.on { margin-top: 18.700px; }
.check.on i { border: 0; background: #0067c0; }
.check.on i svg { display: block; fill: none; stroke: #fff; stroke-width: 2; }
.map { position: relative; width: 875px; height: 839px; margin-left: auto; overflow: hidden; }
.map > svg { display: block; width: 875px; height: 839px; }
.map text { text-anchor: middle; font-family: "Noto Sans", sans-serif; letter-spacing: 0; paint-order: stroke; stroke-linejoin: round; }
.towns text { fill: #444; stroke: rgba(255, 255, 255, .7); stroke-width: 9px; }
.parks text { font-style: italic; fill: #1f8c30; stroke: rgba(255, 255, 255, .65); stroke-width: 9px; }
.exits text { font-style: italic; font-size: 43px; fill: #b02040; stroke: rgba(255, 255, 255, .85); stroke-width: 9px; }
.map text.shield { font-size: 41px; font-weight: 500; fill: #8e3353; }
.callout { position: absolute; z-index: 0; left: 321px; top: 315px; box-sizing: border-box; width: 235px; height: 108px; padding: 12px 0 0 13px; line-height: 28px; color: #000; white-space: nowrap; }
.callout svg { position: absolute; inset: 0; z-index: -1; width: 235px; height: 108px; }
footer { flex: none; padding-right: 22px; line-height: 49px; text-align: right; }
</style>
